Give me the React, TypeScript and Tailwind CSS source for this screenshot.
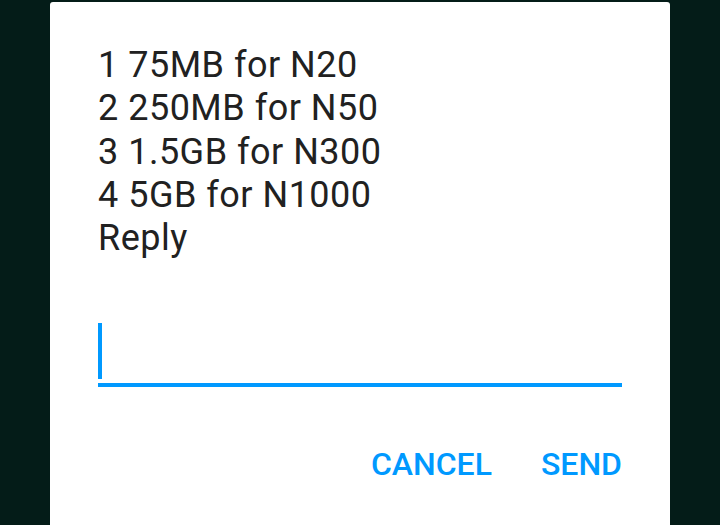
export default function App() {
  return (
    <div className="h-[525px] w-[720px] overflow-hidden bg-[#041c18] pt-[2px] pl-[50px]" style={{ fontFamily: 'Roboto, "Noto Sans", sans-serif' }}>
      <div className="h-[540px] w-[620px] rounded-[3px] bg-white pt-[42px] pl-[48px] pr-[48px]">
        <div className="text-[36px] leading-[43.3px] tracking-[0.5px] text-[#212121]">
          <div>1 75MB for N20</div>
          <div>2 250MB for N50</div>
          <div>3 1.5GB for N300</div>
          <div>4 5GB for N1000</div>
          <div>Reply</div>
        </div>
        <div className="mt-[63px] h-[64px] border-b-4 border-[#0099ff]">
          <div className="h-[56px] w-[4px] bg-[#0099ff]" />
        </div>
        <div className="mt-[57px] flex justify-end gap-[49px] text-[32px] font-medium leading-[40px] text-[#0099ff]">
          <span>CANCEL</span>
          <span>SEND</span>
        </div>
      </div>
    </div>
  )
}
